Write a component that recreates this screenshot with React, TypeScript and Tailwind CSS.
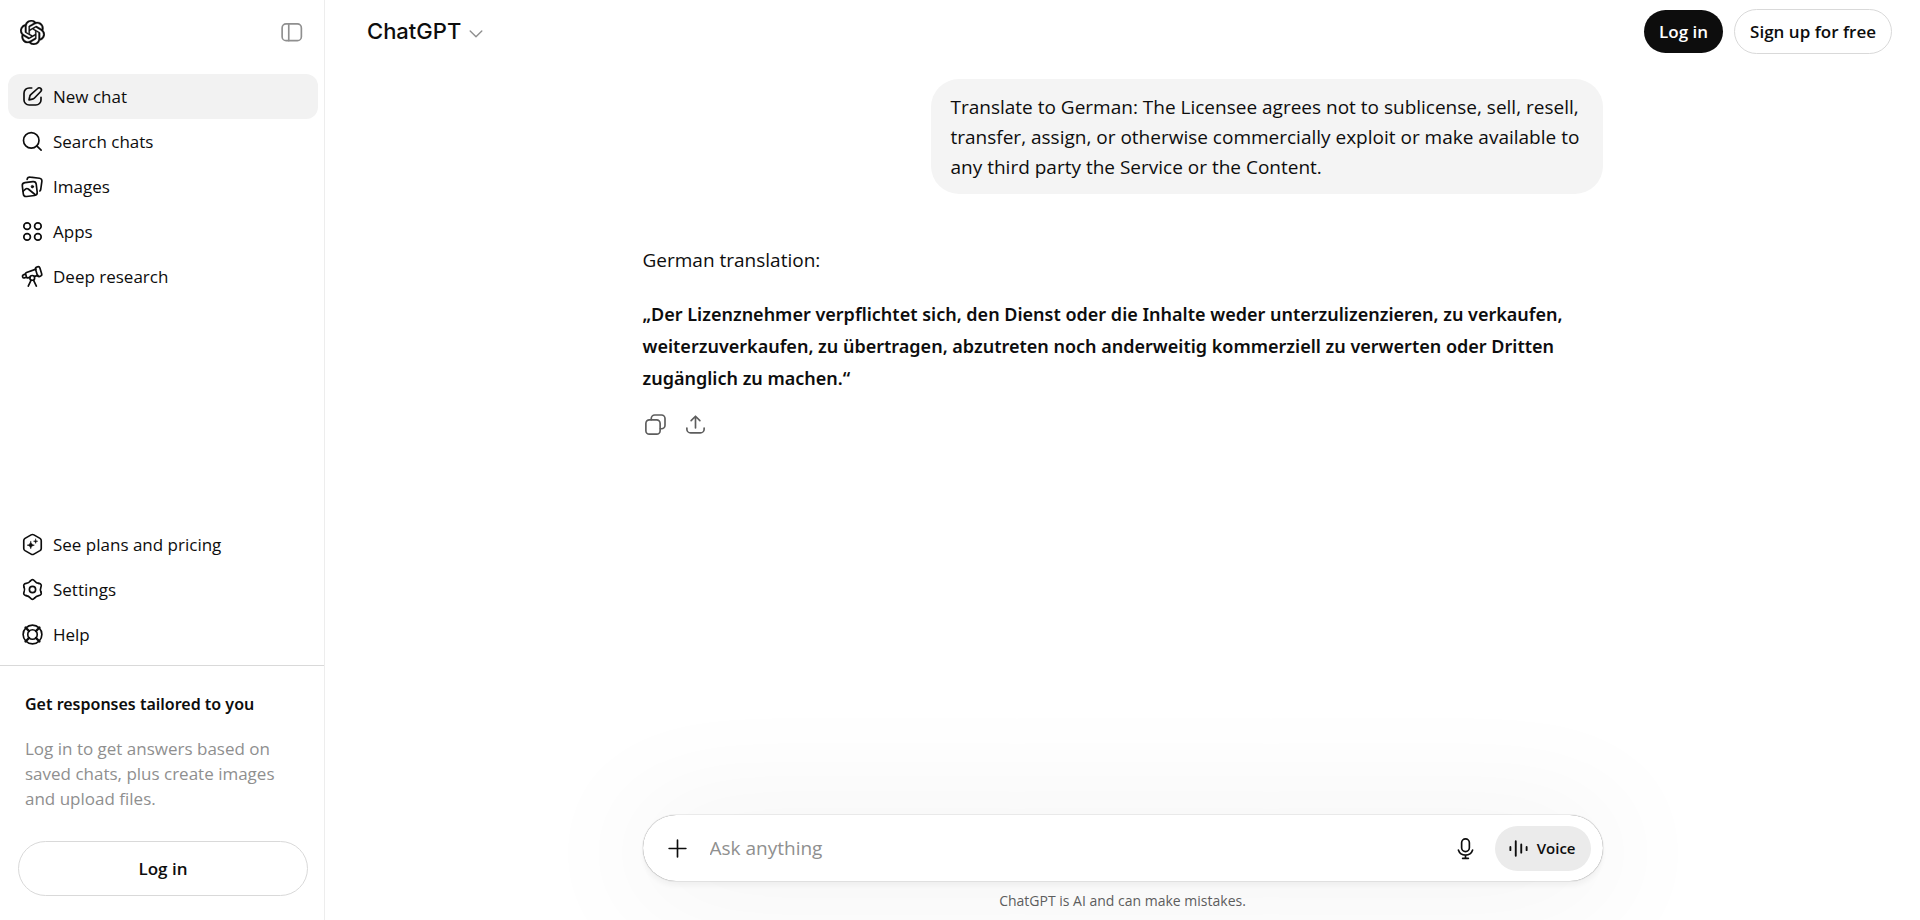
import React, { useState } from 'react';
import { SiOpenai } from 'react-icons/si';

type IconProps = { children: React.ReactNode; className?: string };

const Icon = ({ children, className = 'h-[25px] w-[25px]' }: IconProps) => (
  <svg
    viewBox="0 0 20 20"
    fill="none"
    stroke="currentColor"
    strokeWidth={1.33}
    strokeLinecap="round"
    strokeLinejoin="round"
    aria-hidden="true"
    className={`shrink-0 ${className}`}
  >
    {children}
  </svg>
);

const PanelIcon = () => (
  <Icon>
    <rect x="2.5" y="3.1" width="15.4" height="13.4" rx="3.2" />
    <path d="M7.8 3.1v13.4" />
  </Icon>
);

const EditIcon = () => (
  <Icon>
    <path d="M9.4 3.2H7.4A4.1 4.1 0 0 0 3.2 7.3v5.4a4.1 4.1 0 0 0 4.1 4.1h5.4a4.1 4.1 0 0 0 4.1-4.1v-2.1" />
    <path d="M14.1 3.6a1.7 1.7 0 0 1 2.5 2.4l-5 5.2c-.5.5-1 .8-1.7.9l-2.7.6.6-2.7c.1-.6.4-1.1.8-1.5z" />
  </Icon>
);

const SearchIcon = () => (
  <Icon>
    <circle cx="9" cy="9.1" r="6.2" />
    <path d="m13.4 13.5 3.5 3.4" />
  </Icon>
);

const ImagesIcon = () => (
  <Icon>
    <rect x="2.2" y="6.4" width="11.2" height="11.2" rx="2.4" transform="rotate(-7 8 12)" />
    <path d="M5.7 4.3c.2-1.3 1.2-2 2.5-1.8l7.4.9c1.3.2 2.1 1.2 1.9 2.5l-.9 6.3c-.1.6-.3 1-.7 1.4" />
    <path d="m2.5 13.8 1.9-1.7c.7-.6 1.5-.6 2.2-.1l5.4 4.4" />
    <circle cx="9.9" cy="10.1" r="1" fill="currentColor" strokeWidth={0.6} />
  </Icon>
);

const AppsIcon = () => (
  <Icon>
    <circle cx="5.7" cy="5.7" r="2.65" />
    <circle cx="14.3" cy="5.7" r="2.65" />
    <circle cx="5.7" cy="14.3" r="2.65" />
    <circle cx="14.3" cy="14.3" r="2.65" />
  </Icon>
);

const TelescopeIcon = () => (
  <Icon>
    <rect x="13.1" y="2.2" width="3.6" height="7.8" rx="1.5" transform="rotate(-17 14.9 6.1)" />
    <path d="m12.8 4.1-7.6 2.7c-.6.2-.9.8-.7 1.4l.8 2.4c.2.5.6.7 1.1.5l1.6-.5M11.7 9.9l2.7-.8" />
    <path d="m4.4 8-1.7.7c-.6.2-.8.7-.7 1.2l.2.6c.2.6.7.8 1.3.6l1.6-.5" />
    <circle cx="9.8" cy="11.1" r="1.9" />
    <path d="m8.9 12.9-2.3 4.8M10.8 12.9l2.3 4.8" />
  </Icon>
);

const PlansIcon = () => (
  <Icon>
    <path d="M8.9 2.3a2.2 2.2 0 0 1 2.2 0l4.9 2.8a2.1 2.1 0 0 1 1 1.8v6.2c0 .7-.4 1.4-1 1.8l-4.9 2.8a2.2 2.2 0 0 1-2.2 0L4 14.9a2.1 2.1 0 0 1-1-1.8V6.9c0-.7.4-1.4 1-1.8z" />
    <path
      d="M8.6 7.6c.4 1.9 1 2.5 2.9 2.9-1.9.4-2.5 1-2.9 2.9-.4-1.9-1-2.5-2.9-2.9 1.9-.4 2.5-1 2.9-2.9zM12.5 5.7c.2 1.1.6 1.5 1.7 1.7-1.1.2-1.5.6-1.7 1.7-.2-1.1-.6-1.5-1.7-1.7 1.1-.2 1.5-.6 1.7-1.7z"
      fill="currentColor"
      strokeWidth={0.4}
    />
  </Icon>
);

const SettingsIcon = () => (
  <Icon>
    {[0, 60, 120, 180, 240, 300].map((angle) => (
      <path
        key={angle}
        d="M8.3 3.2Q10 1 11.7 3.2C12.4 4.1 13.9 5 15.04 5.13"
        transform={`rotate(${angle} 10 10)`}
      />
    ))}
    <circle cx="10" cy="10" r="2.5" />
  </Icon>
);

const HelpIcon = () => (
  <Icon>
    <circle cx="10" cy="10" r="7.5" />
    <circle cx="10" cy="10" r="3.8" />
    <path d="m4.4 4.4 2.9 2.9M15.6 4.4l-2.9 2.9M4.4 15.6l2.9-2.9M15.6 15.6l-2.9-2.9" strokeWidth={1.8} />
  </Icon>
);

const CopyIcon = () => (
  <Icon>
    <rect x="2.3" y="6.3" width="11.4" height="11.4" rx="2.8" />
    <path d="M6.6 6.1V5.2a2.8 2.8 0 0 1 2.8-2.8h5.4a2.8 2.8 0 0 1 2.8 2.8v5.4a2.8 2.8 0 0 1-2.8 2.8h-.9" />
  </Icon>
);

const ShareIcon = () => (
  <Icon>
    <path d="M3.1 12.8v.9a3 3 0 0 0 3 3h7.8a3 3 0 0 0 3-3v-.9" />
    <path d="M10 12.7V3.6M6.5 6.9 10 3.4l3.5 3.5" />
  </Icon>
);

const PlusIcon = () => (
  <Icon>
    <path d="M10 3.3v13.4M3.3 10h13.4" />
  </Icon>
);

const MicIcon = () => (
  <Icon>
    <rect x="6.9" y="2.3" width="6.2" height="10.2" rx="3.1" />
    <path d="M4.3 11.2a6 6 0 0 0 11.4 0M10 15.2v2.4M7.7 17.9h4.6" />
  </Icon>
);

const VoiceIcon = () => (
  <Icon>
    <path d="M3.5 8.7v2.6M7.8 4.2v11.6M12.2 6.7v6.6M16.5 8.7v2.6" strokeWidth={1.5} />
  </Icon>
);

const mainLinks = [
  { label: 'New chat', icon: EditIcon, active: true },
  { label: 'Search chats', icon: SearchIcon },
  { label: 'Images', icon: ImagesIcon },
  { label: 'Apps', icon: AppsIcon },
  { label: 'Deep research', icon: TelescopeIcon },
];

const bottomLinks = [
  { label: 'See plans and pricing', icon: PlansIcon },
  { label: 'Settings', icon: SettingsIcon },
  { label: 'Help', icon: HelpIcon },
];

type NavLinkProps = { label: string; icon: React.ComponentType; active?: boolean };

const NavLink = ({ label, icon: LinkIcon, active }: NavLinkProps) => (
  <a
    href="#"
    className={`flex h-[45px] items-center gap-2 rounded-xl px-3 text-[17px] ${active ? 'bg-[#f2f2f2]' : 'hover:bg-[#f2f2f2]'}`}
  >
    <LinkIcon />
    {label}
  </a>
);

const Sidebar = () => (
  <aside className="flex w-[325px] shrink-0 flex-col border-r border-[#ededed]">
    <div className="flex h-16 items-center justify-between px-5">
      <a href="#" aria-label="ChatGPT">
        <SiOpenai className="h-[25px] w-[25px]" stroke="currentColor" strokeWidth={0.3} />
      </a>
      <button type="button" aria-label="Close sidebar" className="text-[#8f8f8f]">
        <PanelIcon />
      </button>
    </div>
    <nav className="px-2 pt-2.5 pr-1.5">
      {mainLinks.map((link) => (
        <NavLink key={link.label} {...link} />
      ))}
    </nav>
    <nav className="mt-auto px-2 pr-1.5 pb-2">
      {bottomLinks.map((link) => (
        <NavLink key={link.label} {...link} />
      ))}
    </nav>
    <section className="border-t border-[#d9d9d9] pt-[23px] pr-4 pb-6 pl-[18px]">
      <h2 className="px-[7px] font-['Noto_Sans',sans-serif] text-base leading-[30px] font-semibold">
        Get responses tailored to you
      </h2>
      <p className="mt-[17px] px-[7px] text-[17px] leading-[25px] text-[#8f8f8f]">
        Log in to get answers based on saved chats, plus create images and upload files.
      </p>
      <button type="button" className="mt-[30px] h-[55px] w-full rounded-full border border-[#d9d9d9] text-[17px] font-semibold">
        Log in
      </button>
    </section>
  </aside>
);

const Header = () => (
  <header className="flex h-[63px] items-center justify-between pr-7 pl-8">
    <button type="button" className="flex items-center gap-[5px] px-2.5 font-['Inter',sans-serif] text-[22px] font-medium">
      ChatGPT
      <svg viewBox="0 0 20 20" fill="none" stroke="#8f8f8f" strokeWidth={1.4} strokeLinecap="round" strokeLinejoin="round" className="mt-1 h-5 w-5">
        <path d="m4.2 7 5.8 5.8L15.8 7" />
      </svg>
    </button>
    <div className="flex items-center gap-[11px] text-[17px] font-semibold">
      <button type="button" className="h-[43px] rounded-full bg-[#0d0d0d] px-[15px] text-white">
        Log in
      </button>
      <button type="button" className="h-[45px] rounded-full border border-[#d9d9d9] px-[15px]">
        Sign up for free
      </button>
    </div>
  </header>
);

const Conversation = () => (
  <div className="mx-auto w-full max-w-[960px] pt-4">
    <div className="ml-auto w-fit max-w-[70%] rounded-[28px] bg-[#f4f4f4] px-5 pt-[13px] pb-3 text-[19px] leading-[30px]">
      Translate to German: The Licensee agrees not to sublicense, sell, resell, transfer, assign, or otherwise
      commercially exploit or make available to any third party the Service or the Content.
    </div>
    <div className="mt-[50px]">
      <p className="text-[19px] leading-[33px]">German translation:</p>
      <p className="mt-[21px] font-['Noto_Sans',sans-serif] text-lg leading-[32px] font-semibold">
        „Der Lizenznehmer verpflichtet sich, den Dienst oder die Inhalte weder unterzulizenzieren, zu verkaufen,
        weiterzuverkaufen, zu übertragen, abzutreten noch anderweitig kommerziell zu verwerten oder Dritten zugänglich
        zu machen.“
      </p>
    </div>
    <div className="mt-[18px] flex gap-[15px] text-[#5d5d5d]">
      <button type="button" aria-label="Copy">
        <CopyIcon />
      </button>
      <button type="button" aria-label="Share">
        <ShareIcon />
      </button>
    </div>
  </div>
);

const Composer = () => {
  const [prompt, setPrompt] = useState('');

  return (
    <div className="mx-auto mt-auto w-full max-w-[960px]">
      <form
        onSubmit={(e) => e.preventDefault()}
        className="flex h-[66px] items-center rounded-full bg-white pr-3 pl-[22px] shadow-[0_5px_125px_15px_rgba(0,0,0,0.05),0_5px_5px_rgba(0,0,0,0.04),0_0_1px_rgba(0,0,0,0.62)]"
      >
        <button type="button" aria-label="Add files">
          <PlusIcon />
        </button>
        <input
          type="text"
          aria-label="Ask anything"
          placeholder="Ask anything"
          value={prompt}
          onChange={(e) => setPrompt(e.target.value)}
          className="ml-5 min-w-0 flex-1 bg-transparent text-[19px] outline-none placeholder:text-[#8f8f8f]"
        />
        <button type="button" aria-label="Dictate">
          <MicIcon />
        </button>
        <button type="button" className="ml-[17px] flex h-[45px] items-center gap-1.5 rounded-full bg-[#ebebeb] pr-[15px] pl-[11px] text-[15px] font-semibold">
          <VoiceIcon />
          Voice
        </button>
      </form>
      <p className="py-2 text-center text-sm leading-[23px] text-[#5d5d5d]">ChatGPT is AI and can make mistakes.</p>
    </div>
  );
};

export default function App() {
  return (
    <div className="flex min-h-screen bg-white font-['Open_Sans','Noto_Sans',sans-serif] text-[#0d0d0d]">
      <Sidebar />
      <main className="flex min-w-0 flex-1 flex-col overflow-hidden">
        <Header />
        <Conversation />
        <Composer />
      </main>
    </div>
  );
}
